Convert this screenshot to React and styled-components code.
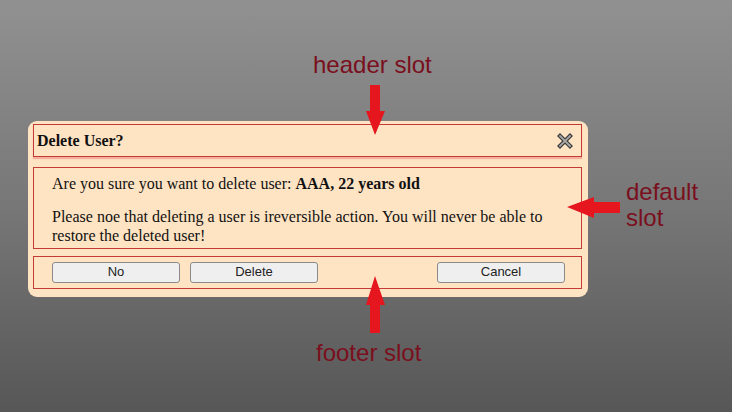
import React from "react";
import styled, { createGlobalStyle } from "styled-components";

const GlobalStyle = createGlobalStyle`
  html, body {
    margin: 0;
    padding: 0;
  }
  body {
    width: 732px;
    height: 412px;
    overflow: hidden;
  }
`;

const Stage = styled.div`
  position: relative;
  width: 732px;
  height: 412px;
  box-sizing: border-box;
  padding: 121px 0 0 28px;
  background: linear-gradient(180deg, #919191 0%, #777 50%, #575757 100%);
`;

const Dialog = styled.div`
  width: 560px;
  box-sizing: border-box;
  padding: 3px 6px 8px 5px;
  background: #ffe4c4;
  border-radius: 9px;
  display: flex;
  flex-direction: column;
`;

const Slot = styled.div`
  border: 1px solid #c33a36;
  box-sizing: border-box;
`;

const Header = styled(Slot)`
  height: 33px;
  display: flex;
  align-items: center;
  justify-content: space-between;
  padding: 0 8px 0 3px;
  box-shadow: 0 2px 1px rgba(230, 110, 110, 0.45);
  font: bold 16px "Liberation Serif", serif;
  color: #111;
`;

const Body = styled(Slot)`
  margin-top: 10px;
  height: 82px;
  padding: 6px 18px 0 18px;
  font: 16px/19px "Liberation Serif", serif;
  color: #111;
  display: flex;
  flex-direction: column;
  gap: 14px;

  > p {
    margin: 0;
    > b {
      font-weight: bold;
    }
  }
`;

const Footer = styled(Slot)`
  margin-top: 7px;
  height: 33px;
  display: flex;
  align-items: center;
  gap: 10px;
  padding: 0 16px 1px 18px;
`;

const Button = styled.button`
  width: 128px;
  height: 21px;
  box-sizing: border-box;
  margin-left: ${(p) => (p.$right ? "auto" : "0")};
  background: #efefef;
  border: 1px solid #8a8a8a;
  border-radius: 3px;
  font: 13px "Liberation Sans", Arial, sans-serif;
  color: #222;
  padding: 0 0 1px;
`;

const CloseIcon = () => (
  <svg width="16" height="16" viewBox="0 0 16 16">
    <path d="M3 3 L13 13 M13 3 L3 13" stroke="#3a3a3a" strokeWidth="4.2" strokeLinecap="square" />
    <path d="M3 3 L13 13 M13 3 L3 13" stroke="#a9a9a9" strokeWidth="1.8" strokeLinecap="square" />
  </svg>
);

const Label = styled.div`
  position: absolute;
  left: ${(p) => p.$x}px;
  top: ${(p) => p.$y}px;
  font: 24px/26px "Liberation Sans", Arial, sans-serif;
  color: #7a0f1d;
  white-space: nowrap;
`;

const Arrow = styled.svg`
  position: absolute;
  left: ${(p) => p.$x}px;
  top: ${(p) => p.$y}px;
`;

export default function App() {
  return (
    <>
      <GlobalStyle />
      <Stage>
        <Dialog>
          <Header>
            <span>Delete User?</span>
            <CloseIcon />
          </Header>
          <Body>
            <p>
              Are you sure you want to delete user: <b>AAA, 22 years old</b>
            </p>
            <p>
              Please noe that deleting a user is ireversible action. You will
              never be able to restore the deleted user!
            </p>
          </Body>
          <Footer>
            <Button>No</Button>
            <Button>Delete</Button>
            <Button $right>Cancel</Button>
          </Footer>
        </Dialog>

        <Label $x={313} $y={52}>header slot</Label>
        <Arrow $x={364} $y={84} width="24" height="52" viewBox="0 0 24 52">
          <polygon points="6,1 16,1 16,27 21,27 11,51 2,27 6,27" fill="#e5161e" />
        </Arrow>

        <Label $x={626} $y={179}>
          default
          <br />
          slot
        </Label>
        <Arrow $x={566} $y={195} width="56" height="25" viewBox="0 0 56 25">
          <polygon points="1,12 28,2 28,7 54,7 54,18 28,18 28,23" fill="#e5161e" />
        </Arrow>

        <Label $x={316} $y={340}>footer slot</Label>
        <Arrow $x={364} $y={275} width="24" height="60" viewBox="0 0 24 60">
          <polygon points="11,1 21,30 16,30 16,58 6,58 6,30 2,30" fill="#e5161e" />
        </Arrow>
      </Stage>
    </>
  );
}
